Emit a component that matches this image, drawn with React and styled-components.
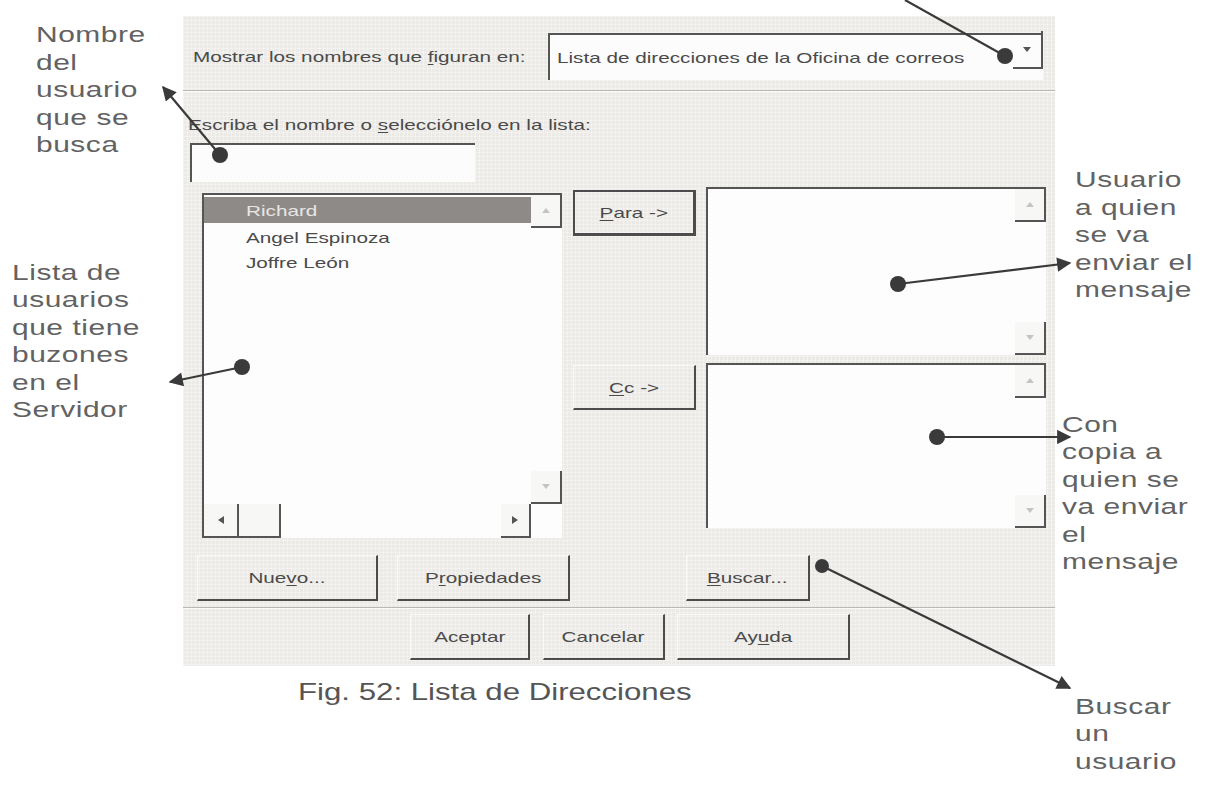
import styled, { createGlobalStyle } from "styled-components";

const GlobalStyle = createGlobalStyle`
  html, body {
    margin: 0;
    padding: 0;
    background: #fff;
  }
  body {
    font-family: "Liberation Sans", Arial, sans-serif;
  }
`;

const leftNotes = [
  { gap: 0, indent: 36, lines: ["Nombre", "del", "usuario", "que se", "busca"] },
  { gap: 100, indent: 12, lines: ["Lista de", "usuarios", "que tiene", "buzones", "en el", "Servidor"] },
];

const rightNotes = [
  { gap: 0, indent: 20, lines: ["Usuario", "a quien", "se va", "enviar el", "mensaje"] },
  { gap: 107, indent: 7, lines: ["Con", "copia a", "quien se", "va enviar", "el", "mensaje"] },
  { gap: 117, indent: 20, lines: ["Buscar", "un", "usuario"] },
];

const users = ["Richard", "Angel Espinoza", "Joffre León"];

function Label({ children, center }) {
  return (
    <Stretch $origin={center ? "center" : "left"}>{children}</Stretch>
  );
}

function Tri({ dir, faint }) {
  return <Triangle $dir={dir} $faint={faint} />;
}

function ScrollColumn() {
  return (
    <VScroll>
      <ScrollBtn $h={33}>
        <Tri dir="up" faint />
      </ScrollBtn>
      <ScrollBtn $h={33}>
        <Tri dir="down" faint />
      </ScrollBtn>
    </VScroll>
  );
}

function Annotations() {
  return (
    <Overlay viewBox="0 0 1231 794" width="1231" height="794">
      <defs>
        <marker id="head" viewBox="0 0 10 10" refX="9" refY="5" markerWidth="8" markerHeight="6.5" orient="auto" markerUnits="strokeWidth">
          <path d="M0 0 L10 5 L0 10 Z" fill="#3a3a3a" />
        </marker>
      </defs>
      <g stroke="#3a3a3a" strokeWidth="2.2" fill="none">
        <line x1="1005" y1="56" x2="905" y2="0" />
        <line x1="220" y1="155" x2="163" y2="87" markerEnd="url(#head)" />
        <line x1="242" y1="367" x2="170" y2="382" markerEnd="url(#head)" />
        <line x1="898" y1="284" x2="1070" y2="263" markerEnd="url(#head)" />
        <line x1="937" y1="437" x2="1070" y2="437" markerEnd="url(#head)" />
        <line x1="822" y1="566" x2="1070" y2="688" markerEnd="url(#head)" />
      </g>
      <g fill="#3a3a3a">
        <circle cx="1005" cy="56" r="8" />
        <circle cx="220" cy="155" r="8" />
        <circle cx="242" cy="367" r="8" />
        <circle cx="898" cy="284" r="8" />
        <circle cx="937" cy="437" r="8" />
        <circle cx="822" cy="566" r="7" />
      </g>
    </Overlay>
  );
}

export default function App() {
  return (
    <>
      <GlobalStyle />
      <Figure>
        <Notes $top={21}>
          {leftNotes.map((n, i) => (
            <Note key={i} $gap={n.gap} $indent={n.indent}>
              {n.lines.map((l) => (
                <NoteLine key={l}>{l}</NoteLine>
              ))}
            </Note>
          ))}
        </Notes>

        <Center>
          <Dialog>
            <TopRow>
              <Label>
                Mostrar los nombres que <u>f</u>iguran en:
              </Label>
              <Combo>
                <ComboText>
                  <Label>Lista de direcciones de la Oficina de correos</Label>
                </ComboText>
                <DropBtn>
                  <Tri dir="down" />
                </DropBtn>
              </Combo>
            </TopRow>
            <Separator $mt={10} />
            <Prompt>
              <Label>
                Escriba el nombre o <u>s</u>elecciónelo en la lista:
              </Label>
            </Prompt>
            <NameInput />

            <Main>
              <UserList>
                <Items>
                  {users.map((u, i) => (
                    <Item key={u} $selected={i === 0}>
                      <Label>{u}</Label>
                    </Item>
                  ))}
                </Items>
                <ScrollColumn />
                <HScroll>
                  <ScrollBtn $w={35}>
                    <Tri dir="left" />
                  </ScrollBtn>
                  <ScrollBtn $w={42} />
                  <ScrollBtn $w={30} $push>
                    <Tri dir="right" />
                  </ScrollBtn>
                </HScroll>
                <Corner />
              </UserList>

              <SideButtons>
                <Button $w={123} $h={46} $default>
                  <Label center>
                    <u>P</u>ara -&gt;
                  </Label>
                </Button>
                <Button $w={123} $h={45} $mt={129}>
                  <Label center>
                    <u>C</u>c -&gt;
                  </Label>
                </Button>
              </SideButtons>

              <Recipients>
                <RecipientBox $h={168}>
                  <BoxBody />
                  <ScrollColumn />
                </RecipientBox>
                <RecipientBox $h={165} $mt={8}>
                  <BoxBody />
                  <ScrollColumn />
                </RecipientBox>
              </Recipients>
            </Main>

            <ButtonRow $mt={17} $pl={14}>
              <Button $w={181} $h={46}>
                <Label center>
                  Nue<u>v</u>o...
                </Label>
              </Button>
              <Button $w={173} $h={46} $ml={19}>
                <Label center>
                  P<u>r</u>opiedades
                </Label>
              </Button>
              <Button $w={124} $h={46} $ml={116}>
                <Label center>
                  <u>B</u>uscar...
                </Label>
              </Button>
            </ButtonRow>
            <Separator $mt={6} />
            <ButtonRow $mt={5} $pl={227}>
              <Button $w={120} $h={46}>
                <Label center>Aceptar</Label>
              </Button>
              <Button $w={122} $h={46} $ml={13}>
                <Label center>Cancelar</Label>
              </Button>
              <Button $w={173} $h={46} $ml={12}>
                <Label center>
                  Ay<u>u</u>da
                </Label>
              </Button>
            </ButtonRow>
          </Dialog>
          <Caption>Fig. 52: Lista de Direcciones</Caption>
        </Center>

        <Notes $top={166}>
          {rightNotes.map((n, i) => (
            <Note key={i} $gap={n.gap} $indent={n.indent}>
              {n.lines.map((l) => (
                <NoteLine key={l}>{l}</NoteLine>
              ))}
            </Note>
          ))}
        </Notes>

        <Annotations />
      </Figure>
    </>
  );
}

const Figure = styled.div`
  position: relative;
  width: 1231px;
  height: 794px;
  display: grid;
  grid-template-columns: 183px 872px 1fr;
  overflow: hidden;
  background: #fff;
`;

const Notes = styled.div`
  display: flex;
  flex-direction: column;
  padding-top: ${(p) => p.$top}px;
`;

const Note = styled.p`
  margin: ${(p) => p.$gap}px 0 0 ${(p) => p.$indent}px;
  font-size: 22px;
  line-height: 27.5px;
  color: #626262;
`;

const NoteLine = styled.span`
  display: block;
  white-space: nowrap;
  letter-spacing: 0.4px;
  transform: scaleX(1.36);
  transform-origin: left center;
`;

const Center = styled.div`
  display: flex;
  flex-direction: column;
`;

const Stretch = styled.span`
  display: inline-block;
  white-space: nowrap;
  transform: scaleX(1.38);
  transform-origin: ${(p) => p.$origin} center;

  u {
    text-decoration-thickness: 1px;
    text-underline-offset: 2px;
  }
`;

const Dialog = styled.section`
  margin-top: 16px;
  height: 650px;
  background-color: #eceae7;
  background-image: linear-gradient(rgba(255, 255, 255, 0.35) 1px, transparent 1px),
    linear-gradient(90deg, rgba(255, 255, 255, 0.35) 1px, transparent 1px);
  background-size: 4px 4px;
  display: flex;
  flex-direction: column;
  font-size: 15px;
  color: #4a4a4a;
`;

const TopRow = styled.div`
  margin-top: 17px;
  height: 47px;
  padding: 0 12px 0 10px;
  display: flex;
  align-items: center;
  justify-content: space-between;
`;

const Combo = styled.div`
  box-sizing: border-box;
  width: 495px;
  height: 47px;
  background: #fcfcfc;
  border-top: 2px solid #555;
  border-left: 2px solid #555;
  display: flex;
  align-items: center;
`;

const ComboText = styled.div`
  padding-left: 7px;
  flex: 1;
`;

const DropBtn = styled.div`
  box-sizing: border-box;
  width: 30px;
  height: 38px;
  margin-top: -4px;
  align-self: flex-start;
  border-right: 2px solid #555;
  border-bottom: 2px solid #555;
  display: flex;
  align-items: center;
  justify-content: center;
`;

const Triangle = styled.span`
  width: 0;
  height: 0;
  border: 4px solid transparent;
  ${(p) => p.$dir === "down" && `border-top: 5px solid ${p.$faint ? "#c4c4c4" : "#555"}; border-bottom-width: 0;`}
  ${(p) => p.$dir === "up" && `border-bottom: 5px solid ${p.$faint ? "#c4c4c4" : "#555"}; border-top-width: 0;`}
  ${(p) => p.$dir === "left" && "border-right: 6px solid #555; border-left-width: 0;"}
  ${(p) => p.$dir === "right" && "border-left: 6px solid #555; border-right-width: 0;"}
`;

const Separator = styled.div`
  margin-top: ${(p) => p.$mt}px;
  border-top: 1px solid #b9b8b4;
  border-bottom: 1px solid #fafafa;
`;

const Prompt = styled.div`
  margin-top: 24px;
  padding-left: 5px;
  line-height: 18px;
`;

const NameInput = styled.div`
  box-sizing: border-box;
  margin: 9px 0 0 7px;
  width: 285px;
  height: 39px;
  background: #fcfcfc;
  border-top: 2px solid #555;
  border-left: 2px solid #555;
`;

const Main = styled.div`
  margin-top: 5px;
  height: 351px;
  padding-left: 19px;
  display: flex;
  align-items: flex-start;
`;

const UserList = styled.div`
  box-sizing: border-box;
  margin-top: 6px;
  width: 360px;
  height: 345px;
  background: #fdfdfd;
  border-top: 2px solid #555;
  border-left: 2px solid #555;
  display: grid;
  grid-template-columns: 1fr 31px;
  grid-template-rows: 1fr 34px;
`;

const Items = styled.div`
  padding-top: 2px;
  display: flex;
  flex-direction: column;
`;

const Item = styled.div`
  height: ${(p) => (p.$selected ? 26 : 25)}px;
  margin-bottom: ${(p) => (p.$selected ? 2 : 0)}px;
  padding-left: 42px;
  display: flex;
  align-items: center;
  background: ${(p) => (p.$selected ? "#8e8a87" : "transparent")};
  color: ${(p) => (p.$selected ? "#e8e6e4" : "#4a4a4a")};
`;

const VScroll = styled.div`
  display: flex;
  flex-direction: column;
  justify-content: space-between;
`;

const ScrollBtn = styled.div`
  box-sizing: border-box;
  width: ${(p) => (p.$w ? `${p.$w}px` : "100%")};
  height: ${(p) => (p.$h ? `${p.$h}px` : "100%")};
  margin-left: ${(p) => (p.$push ? "auto" : "0")};
  background: #f7f7f6;
  border-right: 2px solid #555;
  border-bottom: 2px solid #555;
  display: flex;
  align-items: center;
  justify-content: center;
`;

const HScroll = styled.div`
  display: flex;
`;

const Corner = styled.div``;

const SideButtons = styled.div`
  margin: 3px 0 0 11px;
  display: flex;
  flex-direction: column;
`;

const Button = styled.div`
  box-sizing: border-box;
  width: ${(p) => p.$w}px;
  height: ${(p) => p.$h}px;
  margin-top: ${(p) => p.$mt || 0}px;
  margin-left: ${(p) => p.$ml || 0}px;
  border-top: 1px solid #fafafa;
  border-left: 1px solid #fafafa;
  border-right: 2px solid #4c4c4c;
  border-bottom: 2px solid #4c4c4c;
  display: flex;
  align-items: center;
  justify-content: center;
  color: #4a4a4a;
  ${(p) =>
    p.$default &&
    `
    border: 2px solid #4c4c4c;
    border-right-width: 3px;
    border-bottom-width: 3px;
  `}
`;

const Recipients = styled.div`
  margin-left: 10px;
  width: 340px;
  display: flex;
  flex-direction: column;
`;

const RecipientBox = styled.div`
  box-sizing: border-box;
  height: ${(p) => p.$h}px;
  margin-top: ${(p) => p.$mt || 0}px;
  background: #fdfdfd;
  border-top: 2px solid #555;
  border-left: 2px solid #555;
  display: grid;
  grid-template-columns: 1fr 31px;
`;

const BoxBody = styled.div``;

const ButtonRow = styled.div`
  margin-top: ${(p) => p.$mt}px;
  padding-left: ${(p) => p.$pl}px;
  display: flex;
`;

const Caption = styled.div`
  margin: 12px 0 0 115px;
  font-size: 24px;
  line-height: 28px;
  color: #555;
  white-space: nowrap;
  transform: scaleX(1.3);
  transform-origin: left center;
`;

const Overlay = styled.svg`
  position: absolute;
  inset: 0;
  pointer-events: none;
`;
